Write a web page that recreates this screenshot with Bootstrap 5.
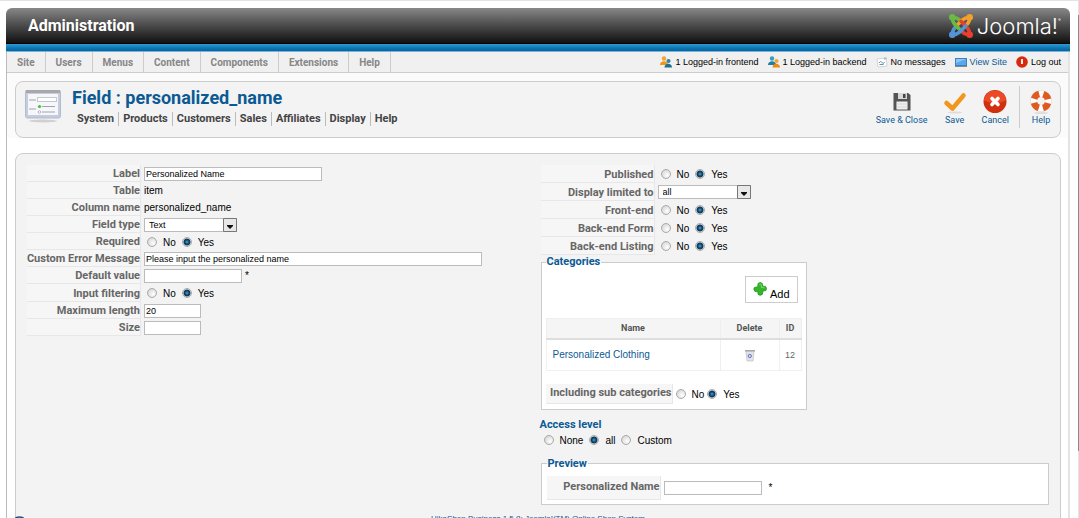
<!DOCTYPE html>
<html lang="en">
<head>
<meta charset="utf-8">
<meta name="viewport" content="width=device-width, initial-scale=1">
<title>Administration - Field : personalized_name</title>
<link rel="stylesheet" href="https://cdn.jsdelivr.net/npm/bootstrap@5.3.0/dist/css/bootstrap.min.css">
<style>
  :root { --plain: "Liberation Sans", Arial, sans-serif; --strong: Roboto, "Liberation Sans", sans-serif; --blue: #0b5a94; }
  html { overflow: hidden auto; scrollbar-width: none; }
  body { font: 10px/14px var(--plain); color: #000; background: #fff; border-top: 1px solid #e3e3e3; padding: 7px 9px 0 6px; }
  a { color: var(--blue); text-decoration: none; }
  .masthead { height: 36px; padding: 0 9px 0 22px; border-radius: 6px 6px 0 0; background: linear-gradient(#888, #4a4a4a 50%, #111); border-bottom: 1px solid #000; }
  .masthead h1 { font: 700 16px/20px var(--strong); color: #fff; }
  .wordmark { font: 300 22px/24px Inter, sans-serif; color: #fff; }
  .stripe { height: 8px; background: linear-gradient(#2e9bd0, #0d75b3 60%, #0464a2); border-bottom: 1px solid #7fb3d1; }
  .frame { border-left: 1px solid #bbb; border-right: 2px solid #e3e3e3; }
  .menubar { background: #f0f0f0; border-bottom: 1px solid #ccc; min-height: 21px; }
  .menubar .nav-link { font: 700 10px/22px var(--strong); height: 20px; color: #868686; padding: 0 10px; border-right: 1px solid #ccc; }
  .state { font-size: 9px; line-height: 20px; gap: 9px; padding-right: 7px; }
  .state span, .state a { display: flex; align-items: center; gap: 3px; }
  .state .plaintext { color: #000; }
  .toolband { background: #fbfbfb; padding: 8px 7px 0 8px; }
  .toolbox { background: #f3f3f3; border: 1px solid #ccc; border-radius: 8px; min-height: 57px; padding: 4px 7px 4px 9px; }
  .toolbox h2 { font: 700 18px/24px var(--strong); color: var(--blue); margin: 0; }
  .crest { margin-right: 11px; }
  .submenu { font: 700 11px/14px var(--strong); padding: 2px 0 0 5px; }
  .submenu a { color: #444; padding-right: 4px; }
  .submenu a + a { border-left: 1px solid #bbb; padding-left: 4px; }
  .tools { gap: 15px; }
  .tool { border: 0; background: none; padding: 4px 0 0; font: 9px/12px var(--strong); color: var(--blue); display: flex; flex-direction: column; align-items: center; }
  .rule { width: 1px; height: 42px; background: #ccc; margin: 0 -6px 0 -5px; }
  .panel { margin: 15px 7px 0 8px; background: #f3f3f3; border: 1px solid #ccc; border-radius: 8px 8px 0 0; padding: 11px 11px 0; }
  .halves { display: grid; grid-template-columns: 1fr 1fr; column-gap: 5px; }
  .line { display: flex; align-items: center; gap: 3px; height: 17px; }
  .line.tall { height: 18px; }
  .key { font: 700 11px/14px var(--strong); color: #666; background: #f6f6f6; border-right: 1px solid #e7e7e7; border-bottom: 1px solid #e7e7e7; width: 114px; align-self: stretch; display: flex; align-items: center; justify-content: flex-end; padding: 2px 0 0; white-space: nowrap; flex: none; }
  .box { height: 14px; border: 1px solid #bbb; background: #fff; padding: 0 1px; font: 9px/12px var(--plain); color: #000; border-radius: 0; min-width: 0; }
  .w-s { width: 57px; } .w-m { width: 98px; } .w-l { width: 178px; } .w-xl { width: 338px; }
  .pick { position: relative; display: inline-flex; width: 93px; }
  .pick select { appearance: none; width: 100%; height: 14px; padding: 0 16px 0 4px; border: 1px solid #bbb; background: #fff; font: 9px/12px var(--plain); border-radius: 0; color: #000; }
  .pick svg { position: absolute; right: 0; top: 0; pointer-events: none; }
  .opt { display: inline-flex; align-items: center; gap: 6px; padding: 0 3px; }
  .opt label { padding-top: 2px; }
  .opt input { appearance: none; width: 10px; height: 10px; margin: 0; border: 1px solid #aaa; border-radius: 50%; background: radial-gradient(circle at 65% 65%, #fff, #ccc); }
  .opt input:checked { background: radial-gradient(circle, #49a8d8 0, #0d4870 2px, #16384f 3px, #e6eef3 4px); }
  fieldset { border: 1px solid #ccc; background: #fff; }
  legend { float: none; width: auto; font: 700 11px/12px var(--strong); color: var(--blue); margin: 0; padding: 0 1px; background: linear-gradient(#f3f3f3 50%, #fff 50%); }
  .cats { width: 266px; margin-top: 1px; padding: 0 4px 5px; }
  .add { display: flex; align-items: flex-end; gap: 3px; border: 1px solid #ccc; background: #fff; padding: 3px 7px 1px; height: 27px; margin: 8px 4px 15px auto; font: 11px/14px var(--plain); color: #000; }
  .list { width: 100%; border-collapse: collapse; color: #666; }
  .list th { font: 700 9px/17px var(--strong); text-align: center; background: #f5f5f5; border: 1px solid #eee; border-bottom: 2px solid #ddd; color: #555; }
  .list td { height: 31px; border: 1px solid #f0f0f0; text-align: center; }
  .list td:first-child { text-align: left; padding-left: 6px; }
  .list .num { font-size: 9px; }
  .c-del { width: 59px; } .c-id { width: 22px; }
  .incl { height: 20px; margin-top: 13px; }
  .incl .key { width: 127px; padding: 0; }
  .incl .opt { padding: 0; }
  .access { font: 700 11px/14px var(--strong); color: var(--blue); margin: 8px 0 0 -1px; }
  .preview { padding: 0 5px 4px; margin-top: 9px; }
  .preview .line { height: 24px; margin-top: 6px; }
  .preview .key { padding: 0; }
  .foot { font-size: 8px; line-height: 12px; text-align: center; margin-top: 8px; }
  .scroll { position: fixed; top: 1px; right: 0; bottom: 0; width: 1px; background: linear-gradient(#e3e3e3 14px, #8a8a8a 14px, #8a8a8a 87%, #e3e3e3 87%); }
  .orb { position: fixed; left: 11px; bottom: -15px; }
</style>
<script src="https://cdn.jsdelivr.net/npm/bootstrap@5.3.0/dist/js/bootstrap.bundle.min.js"></script>
</head>
<body>
<header class="masthead d-flex align-items-center justify-content-between">
  <h1 class="m-0">Administration</h1>
  <div class="d-flex align-items-center">
    <svg class="me-1" width="24" height="24" viewBox="0 0 24 24" fill="none" stroke-width="3.600" stroke-linecap="round" stroke-linejoin="round">
      <defs><g id="arm"><path d="M3.500 3.500C3.300 8 4.500 9 6.500 11.200L12 16.700M3.500 3.500C8 3.300 9.200 4.700 11 6.500"/><circle cx="3.300" cy="3.300" r="1.500"/></g></defs>
      <use href="#arm" stroke="#69b944"/>
      <use href="#arm" stroke="#f5a02a" transform="rotate(90 12 12)"/>
      <use href="#arm" stroke="#e8402f" transform="rotate(180 12 12)"/>
      <use href="#arm" stroke="#5594d4" transform="rotate(270 12 12)"/>
      <path d="M6.500 11.200l3 3" stroke="#69b944"/>
    </svg>
    <span class="wordmark">Joomla!</span>
    <svg class="align-self-start mt-1" width="3" height="3" viewBox="0 0 3 3"><circle cx="1.500" cy="1.500" r="1.200" fill="#bbb"/></svg>
  </div>
</header>
<div class="stripe"></div>
<div class="frame">
  <div class="menubar d-flex justify-content-between">
    <nav class="nav flex-nowrap">
      <a class="nav-link" href="#">Site</a><a class="nav-link" href="#">Users</a><a class="nav-link" href="#">Menus</a><a class="nav-link" href="#">Content</a><a class="nav-link" href="#">Components</a><a class="nav-link" href="#">Extensions</a><a class="nav-link" href="#">Help</a>
    </nav>
    <div class="state d-flex text-nowrap">
      <span><svg width="12" height="12" viewBox="0 0 12 12"><circle cx="4" cy="2.500" r="2.200" fill="#f3a52c"/><path d="M0 9c0-5 8-5 8 0z" fill="#ee951b"/><circle cx="8.500" cy="5" r="2.100" fill="#2d86a8"/><path d="M4.500 11.500c0-5 7.500-5 7.500 0z" fill="#1f6f92"/></svg>1 Logged-in frontend</span>
      <span><svg width="12" height="12" viewBox="0 0 12 12"><circle cx="4" cy="2.500" r="2.200" fill="#3d9cbc"/><path d="M0 9c0-5 8-5 8 0z" fill="#1f7fa6"/><circle cx="8.500" cy="5" r="2.100" fill="#f3a52c"/><path d="M4.500 11.500c0-5 7.500-5 7.500 0z" fill="#ec8a15"/></svg>1 Logged-in backend</span>
      <span><svg width="12" height="12" viewBox="0 0 12 12"><path d="M1 3l9-1 1 8-9 1z" fill="#fff" stroke="#d5d5d5"/><path d="M3 7q1.500-3 3-.5t2.500-.5M3.500 8.500h4" fill="none" stroke="#5f97b8"/><path d="M8 1.500h2.500v2H8z" fill="#9dbfd3"/></svg>No messages</span>
      <a href="#"><svg width="12" height="9" viewBox="0 0 12 9"><rect x=".5" y=".5" width="11" height="7" fill="#5aa7ea" stroke="#3b82c4"/><path d="M1 1h10L1 5z" fill="#8ec6f5"/><path d="M0 8.500h12" stroke="#888"/></svg>View Site</a>
      <a class="plaintext" href="#"><svg width="12" height="12" viewBox="0 0 12 12"><circle cx="6" cy="6" r="5.800" fill="#d9290b"/><path d="M6 3v5" stroke="#fff" stroke-width="1.800"/></svg>Log out</a>
    </div>
  </div>
  <div class="toolband">
    <div class="toolbox d-flex justify-content-between">
      <div class="d-flex">
        <svg class="crest mt-1" width="36" height="34" viewBox="0 0 36 34"><ellipse cx="18" cy="31" rx="14" ry="1.500" fill="#d0d0d0"/><rect x=".5" y="0" width="35" height="28" rx="2" fill="#c6ccdd" stroke="#b4bbce"/><path d="M1 0h34v3H1z" fill="#a8a8ac"/><rect x="3" y="4" width="30" height="21" fill="#f6f7fa"/><path d="M4 10h7M4 19h7M17 16.500h13M17 22h13" stroke="#a0a4ac"/><rect x="12.500" y="7.500" width="19" height="4" fill="#fff" stroke="#c4c8d0"/><circle cx="14.500" cy="16.500" r="1.600" fill="#43bd3a"/><circle cx="14.500" cy="22" r="1.300" fill="#fff" stroke="#999" stroke-width=".7"/></svg>
        <div>
          <h2>Field : personalized_name</h2>
          <nav class="submenu d-flex"><a href="#">System</a><a href="#">Products</a><a href="#">Customers</a><a href="#">Sales</a><a href="#">Affiliates</a><a href="#">Display</a><a href="#">Help</a></nav>
        </div>
      </div>
      <div class="tools d-flex align-items-start">
        <button class="tool" type="button"><svg width="24" height="24" viewBox="0 0 24 24"><path d="M3.500 3H18l2.500 2v15.500h-17z" fill="#555"/><path d="M8 3h9v6H8z" fill="#d8d8d8"/><path d="M13 4h2.500v4H13z" fill="#444"/><path d="M6.500 11.500h11v8h-11z" fill="#f0f0f0"/><path d="M6.500 14h11M6.500 17h11" stroke="#d5d5d5"/></svg>Save &amp; Close</button>
        <button class="tool" type="button"><svg width="24" height="24" viewBox="0 0 24 24"><ellipse cx="12" cy="22.500" rx="7" ry="1" fill="#ddd"/><path d="M3.500 13l6 5.500L20.500 5.500" fill="none" stroke="#f3961d" stroke-width="4.500" stroke-linecap="round" stroke-linejoin="round"/></svg>Save</button>
        <button class="tool" type="button"><svg width="24" height="24" viewBox="0 0 24 24"><circle cx="12" cy="11.500" r="11.500" fill="#d0300f"/><path d="M1 10.500a11 10 0 0122 0q-11 5-22 0z" fill="#ea4a25"/><path d="M9 8.500l6 6m0-6l-6 6" stroke="#fff" stroke-width="3.600" stroke-linecap="round"/></svg>Cancel</button>
        <span class="rule"></span>
        <button class="tool" type="button"><svg width="24" height="24" viewBox="0 0 24 24" fill="none"><ellipse cx="12" cy="23" rx="7" ry="1" fill="#ddd"/><circle cx="12" cy="11" r="7.300" stroke="#ddd" stroke-width="7"/><circle cx="12" cy="11" r="7.300" stroke="#fff" stroke-width="6"/><circle cx="12" cy="11" r="7.300" stroke="#e05a1f" stroke-width="6.500" stroke-dasharray="7.200 4.267" stroke-dashoffset="-2.134"/></svg>Help</button>
      </div>
    </div>
  </div>
  <main class="panel">
    <form class="halves">
      <section>
        <div class="line"><label class="key" for="lb">Label</label><input class="box w-l" id="lb" type="text" value="Personalized Name"></div>
        <div class="line"><span class="key">Table</span><span>item</span></div>
        <div class="line"><span class="key">Column name</span><span>personalized_name</span></div>
        <div class="line"><label class="key" for="ft">Field type</label><span class="pick"><select id="ft"><option>Text</option></select><svg width="14" height="14"><path d="M.5.5h13v13H.5z" fill="#e8e8e8" stroke="#777"/><path d="M4 7h6v1L7 11 4 8z" fill="#111"/></svg></span></div>
        <div class="line"><span class="key">Required</span><span class="opt"><input type="radio" name="rq" id="rq0"><label for="rq0">No</label></span><span class="opt ps-0"><input type="radio" name="rq" id="rq1" checked><label for="rq1">Yes</label></span></div>
        <div class="line"><label class="key" for="em">Custom Error Message</label><input class="box w-xl" id="em" type="text" value="Please input the personalized name"></div>
        <div class="line"><label class="key" for="dv">Default value</label><input class="box w-m" id="dv" type="text"><span>*</span></div>
        <div class="line tall"><span class="key">Input filtering</span><span class="opt"><input type="radio" name="fl" id="fl0"><label for="fl0">No</label></span><span class="opt ps-0"><input type="radio" name="fl" id="fl1" checked><label for="fl1">Yes</label></span></div>
        <div class="line"><label class="key" for="ml">Maximum length</label><input class="box w-s" id="ml" type="text" value="20"></div>
        <div class="line"><label class="key" for="sz">Size</label><input class="box w-s" id="sz" type="text"></div>
      </section>
      <section>
        <div class="line tall"><span class="key">Published</span><span class="opt"><input type="radio" name="pb" id="pb0"><label for="pb0">No</label></span><span class="opt ps-0"><input type="radio" name="pb" id="pb1" checked><label for="pb1">Yes</label></span></div>
        <div class="line tall"><label class="key" for="dl">Display limited to</label><span class="pick"><select id="dl"><option>all</option></select><svg width="14" height="14"><path d="M.5.5h13v13H.5z" fill="#e8e8e8" stroke="#777"/><path d="M4 7h6v1L7 11 4 8z" fill="#111"/></svg></span></div>
        <div class="line tall"><span class="key">Front-end</span><span class="opt"><input type="radio" name="fe" id="fe0"><label for="fe0">No</label></span><span class="opt ps-0"><input type="radio" name="fe" id="fe1" checked><label for="fe1">Yes</label></span></div>
        <div class="line tall"><span class="key">Back-end Form</span><span class="opt"><input type="radio" name="bf" id="bf0"><label for="bf0">No</label></span><span class="opt ps-0"><input type="radio" name="bf" id="bf1" checked><label for="bf1">Yes</label></span></div>
        <div class="line tall"><span class="key">Back-end Listing</span><span class="opt"><input type="radio" name="bl" id="bl0"><label for="bl0">No</label></span><span class="opt ps-0"><input type="radio" name="bl" id="bl1" checked><label for="bl1">Yes</label></span></div>
        <fieldset class="cats">
          <legend>Categories</legend>
          <button class="add" type="button"><svg class="mb-1" width="14" height="15" viewBox="0 0 14 15"><path d="M5 1.500q2.500-2 4.300 0l.4 2.700 2.800.2q2 2 .2 4.300l-2.800.2-.4 3.300q-2 2-4.400.2L4.800 9.700 2 9.500Q0 7.500 1.400 5.400l3.400-.6z" fill="#35b52a" stroke="#24931c" stroke-width=".8" stroke-linejoin="round"/><path d="M6.200 2.500q1.200-1 2 0l.3 3 3 .3" fill="none" stroke="#7ddc6c"/></svg>Add</button>
          <table class="list">
            <colgroup><col><col class="c-del"><col class="c-id"></colgroup>
            <thead><tr><th>Name</th><th>Delete</th><th>ID</th></tr></thead>
            <tbody><tr><td><a href="#">Personalized Clothing</a></td><td><a href="#" aria-label="Delete"><svg width="10" height="13" viewBox="0 0 10 13"><path d="M1 2h8l-1 10H2z" fill="#e3e3e8" stroke="#b5b5bb" stroke-width=".6"/><path d="M0 1h10v1.500H0z" fill="#aaa"/><circle cx="4.800" cy="7" r="1.600" fill="none" stroke="#5b6fc0"/></svg></a></td><td class="num">12</td></tr></tbody>
          </table>
          <div class="line incl"><span class="key">Including sub categories</span><span class="opt"><input type="radio" name="sc" id="sc0"><label for="sc0">No</label></span><span class="opt"><input type="radio" name="sc" id="sc1" checked><label for="sc1">Yes</label></span></div>
        </fieldset>
        <h3 class="access">Access level</h3>
        <div class="line"><span class="opt"><input type="radio" name="ac" id="ac0"><label for="ac0">None</label></span><span class="opt ps-0"><input type="radio" name="ac" id="ac1" checked><label for="ac1">all</label></span><span class="opt ps-0"><input type="radio" name="ac" id="ac2"><label for="ac2">Custom</label></span></div>
        <fieldset class="preview">
          <legend>Preview</legend>
          <div class="line"><label class="key" for="pn">Personalized Name</label><input class="box w-m" id="pn" type="text"><span class="ms-1">*</span></div>
        </fieldset>
      </section>
    </form>
    <footer class="foot"><a href="#">HikaShop Business 1.5.8: Joomla!(TM) Online Shop System</a></footer>
  </main>
</div>
<div class="scroll"></div>
<svg class="orb" width="17" height="17" viewBox="0 0 17 17"><circle cx="8.500" cy="8.500" r="7.500" fill="#fff" stroke="#1d4f7c" stroke-width="1.500"/></svg>
</body>
</html>
